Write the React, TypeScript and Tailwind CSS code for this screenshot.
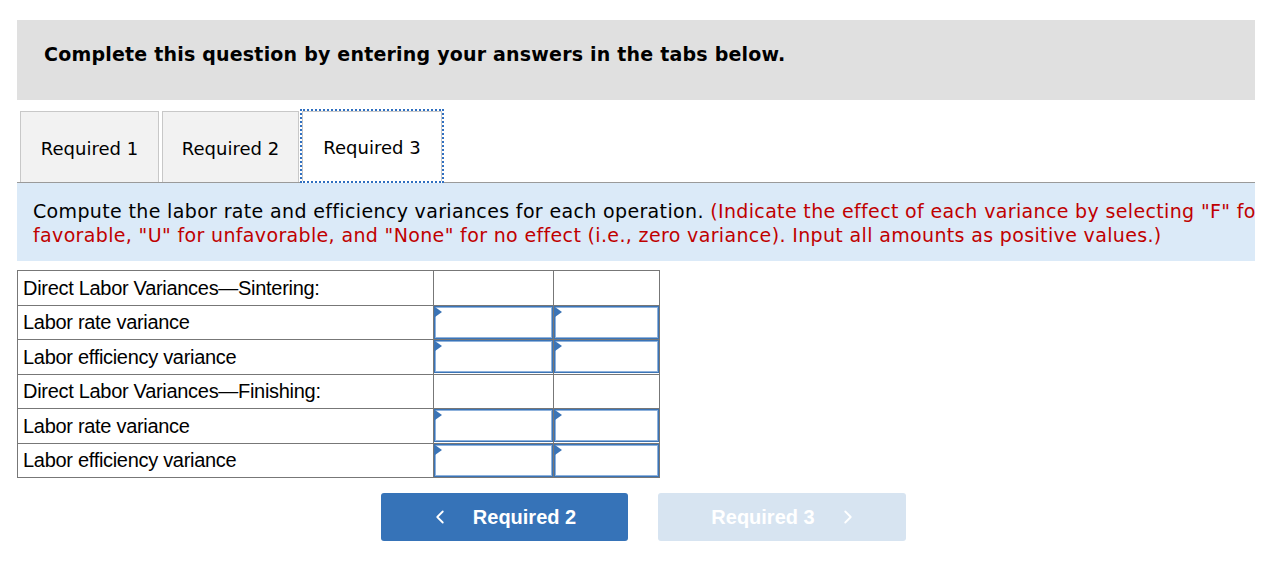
import { ChevronLeft, ChevronRight } from "lucide-react";

const rows = [
  { label: "Direct Labor Variances\u2014Sintering:", input: false },
  { label: "Labor rate variance", input: true },
  { label: "Labor efficiency variance", input: true },
  { label: "Direct Labor Variances\u2014Finishing:", input: false },
  { label: "Labor rate variance", input: true },
  { label: "Labor efficiency variance", input: true },
];

function InputCell() {
  return (
    <td className="border border-[#777] p-0 h-[34px]">
      <div className="relative h-[33px] border border-[#3b74b6]">
        <div className="h-full border border-[#8fb2dc] bg-white" />
        <div className="absolute left-0 top-0 w-0 h-0 border-t-[5px] border-b-[5px] border-l-[7px] border-t-transparent border-b-transparent border-l-[#3b74b6]" />
      </div>
    </td>
  );
}

export default function App() {
  return (
    <div className="bg-white w-[1272px] h-[575px] overflow-hidden pt-[20px] pl-[17px] font-['DejaVu_Sans',Verdana,sans-serif]">
      <div className="w-[1238px] h-[80px] bg-[#e0e0e0] pl-[27px] pt-[25px]">
        <div className="font-bold text-[19px] leading-none tracking-[0.2px] text-black">
          Complete this question by entering your answers in the tabs below.
        </div>
      </div>

      <div className="w-[1238px] mt-[10px] flex items-end border-b border-[#9a9a9a] pl-[3px] h-[73px]">
        <div className="w-[139px] h-[71px] pt-[2px] bg-[#f2f2f2] border border-b-0 border-[#c8c8c8] flex items-center justify-center text-[18px] text-black">
          Required 1
        </div>
        <div className="ml-[3px] w-[137px] h-[71px] pt-[2px] bg-[#f2f2f2] border border-b-0 border-[#c8c8c8] flex items-center justify-center text-[18px] text-black">
          Required 2
        </div>
        <div className="ml-[1px] w-[144px] h-[74px] -mb-[1px] border-2 border-dotted border-[#2f6fc0] bg-white">
          <div className="h-full pt-[2px] border border-b-0 border-[#c8c8c8] flex items-center justify-center text-[18px] text-black">
            Required 3
          </div>
        </div>
      </div>

      <div className="w-[1238px] h-[78px] bg-[#dbeaf8] overflow-hidden pl-[16px] pt-[16px]">
        <p className="w-[1264px] text-[19px] leading-[24px] text-black tracking-[0.35px]">
          Compute the labor rate and efficiency variances for each operation.{" "}
          <span className="text-[#c00000]">
            (Indicate the effect of each variance by selecting "F" for favorable, "U" for unfavorable, and "None" for no effect (i.e., zero variance). Input all amounts as positive values.)
          </span>
        </p>
      </div>

      <table className="mt-[9px] border-collapse w-[643px] font-['Liberation_Sans',Arial,sans-serif] text-[20px] text-black">
        <colgroup>
          <col className="w-[417px]" />
          <col className="w-[120px]" />
          <col className="w-[106px]" />
        </colgroup>
        <tbody>
          {rows.map((r, i) => (
            <tr key={i} className="h-[34.5px]">
              <td className="border border-[#777] px-[5px] leading-none tracking-[-0.3px]">{r.label}</td>
              {r.input ? (
                <>
                  <InputCell />
                  <InputCell />
                </>
              ) : (
                <>
                  <td className="border border-[#777]" />
                  <td className="border border-[#777]" />
                </>
              )}
            </tr>
          ))}
        </tbody>
      </table>

      <div className="mt-[15px] ml-[364px] flex gap-[30px] font-['Liberation_Sans',Arial,sans-serif] font-bold text-[20px] text-white">
        <button className="w-[247px] h-[48px] rounded-[3px] bg-[#3673b8] flex items-center justify-center gap-[22px]">
          <ChevronLeft size={22} strokeWidth={2} />
          <span className="mr-[4px]">Required 2</span>
        </button>
        <button className="w-[248px] h-[48px] rounded-[3px] bg-[#d7e4f1] flex items-center justify-center gap-[22px]">
          <span className="ml-[6px]">Required 3</span>
          <ChevronRight size={22} strokeWidth={2} />
        </button>
      </div>
    </div>
  );
}
